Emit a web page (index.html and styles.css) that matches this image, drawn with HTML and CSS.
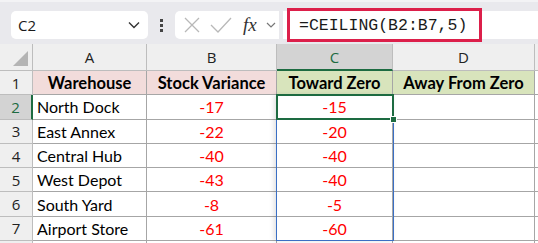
FILE: index.html
```html
<!DOCTYPE html>
<html lang="en">
  <head>
    <meta charset="UTF-8" />
    <title>CEILING</title>
    <link rel="stylesheet" href="styles.css">
  </head>
  <body>

    <div class="toolbar">
      <div class="name-box">
        <span>C2</span>
        <svg width="12" height="8" viewBox="0 0 12 8"><path d="M1 1.5 L6 6.5 L11 1.5" fill="none" stroke="#333" stroke-width="1.4"/></svg>
      </div>
      <div class="dots"><i></i><i></i><i></i></div>
      <div class="controls">
        <svg width="18" height="18" viewBox="0 0 18 18"><path d="M2 2 L16 16 M16 2 L2 16" stroke="#b8b8b8" stroke-width="1.3"/></svg>
        <svg width="22" height="18" viewBox="0 0 22 18"><path d="M1 9 L8 16 L21 2" fill="none" stroke="#b8b8b8" stroke-width="1.3"/></svg>
        <span class="fx">fx</span>
        <svg width="10" height="7" viewBox="0 0 10 7"><path d="M1 1 L5 5 L9 1" fill="none" stroke="#777" stroke-width="1.2"/></svg>
      </div>
      <div class="formula-bar">
        <div class="formula">=CEILING(B2:B7,5)</div>
      </div>
    </div>

    <div class="sheet">
      <div class="corner"><b></b></div>
      <div class="col-head">A</div>
      <div class="col-head">B</div>
      <div class="col-head active">C</div>
      <div class="col-head">D</div>
      <div class="col-head blank"></div>

      <div class="row-head">1</div>
      <div class="cell title pink">Warehouse</div>
      <div class="cell title pink">Stock Variance</div>
      <div class="cell title green">Toward Zero</div>
      <div class="cell title green">Away From Zero</div>
      <div class="cell spare"></div>

      <div class="row-head active">2</div>
      <div class="cell">North Dock</div>
      <div class="cell num">-17</div>
      <div class="cell num">-15</div>
      <div class="cell"></div>
      <div class="cell spare"></div>

      <div class="row-head">3</div>
      <div class="cell">East Annex</div>
      <div class="cell num">-22</div>
      <div class="cell num">-20</div>
      <div class="cell"></div>
      <div class="cell spare"></div>

      <div class="row-head">4</div>
      <div class="cell">Central Hub</div>
      <div class="cell num">-40</div>
      <div class="cell num">-40</div>
      <div class="cell"></div>
      <div class="cell spare"></div>

      <div class="row-head">5</div>
      <div class="cell">West Depot</div>
      <div class="cell num">-43</div>
      <div class="cell num">-40</div>
      <div class="cell"></div>
      <div class="cell spare"></div>

      <div class="row-head">6</div>
      <div class="cell">South Yard</div>
      <div class="cell num">-8</div>
      <div class="cell num">-5</div>
      <div class="cell"></div>
      <div class="cell spare"></div>

      <div class="row-head">7</div>
      <div class="cell">Airport Store</div>
      <div class="cell num">-61</div>
      <div class="cell num">-60</div>
      <div class="cell"></div>
      <div class="cell spare"></div>

      <div class="row-head"></div>
      <div class="cell"></div>
      <div class="cell"></div>
      <div class="cell"></div>
      <div class="cell"></div>
      <div class="cell spare"></div>

      <div class="range"></div>
      <div class="active-cell"><span class="handle"></span></div>
    </div>

  </body>
</html>
```

FILE: styles.css
```css
body {
  margin: 0;
  background: #ffffff;
  overflow: hidden;
}

.toolbar {
  height: 44px;
  box-sizing: border-box;
  padding: 11px 0 5px 11px;
  background: #e9e9ed;
  border-top: 2px solid #f3f3f5;
  display: flex;
  align-items: stretch;
  font-family: "Open Sans", sans-serif;
}

.name-box {
  width: 137px;
  box-sizing: border-box;
  background: #ffffff;
  border-radius: 5px;
  display: flex;
  align-items: center;
  justify-content: space-between;
  padding: 0 8px 0 7px;
  font-size: 15px;
  color: #1a1a1a;
  margin-top: -2px;
}

.dots {
  width: 27px;
  display: flex;
  flex-direction: column;
  align-items: center;
  justify-content: center;
  gap: 2px;
  margin-top: -2px;
}

.dots i {
  width: 3px;
  height: 3px;
  background: #444;
}

.controls {
  width: 104px;
  box-sizing: border-box;
  background: #ffffff;
  border-radius: 5px 0 0 5px;
  display: flex;
  align-items: center;
  gap: 9px;
  padding-left: 8px;
  margin-top: -2px;
}

.fx {
  font-family: "Liberation Serif", serif;
  font-style: italic;
  font-size: 19px;
  color: #333;
  margin-left: 2px;
}

.formula-bar {
  flex: 1;
  background: #ffffff;
  margin: -2px 0 0 4px;
  position: relative;
}

.formula {
  position: absolute;
  left: 4px;
  top: -3px;
  width: 195px;
  height: 34px;
  box-sizing: border-box;
  border: 3px solid #dc1f4a;
  padding-left: 9px;
  display: flex;
  align-items: center;
  font-family: "Liberation Mono", monospace;
  font-size: 16.5px;
  color: #1a1a1a;
}

.sheet {
  position: relative;
  display: grid;
  grid-template-columns: 33px 114px 130px 116px 142px 3px;
  grid-template-rows: 27px repeat(8, 24.3px);
  font-family: Lato, sans-serif;
  font-size: 16px;
  color: #000;
}

.corner {
  background: #efefef;
  border-right: 1px solid #bdbdbd;
  border-bottom: 1px solid #bdbdbd;
  position: relative;
}

.corner b {
  position: absolute;
  right: 4px;
  bottom: 4px;
  width: 0;
  height: 0;
  border-left: 15px solid transparent;
  border-bottom: 15px solid #b4b4b4;
}

.col-head {
  background: #efefef;
  border-right: 1px solid #bdbdbd;
  border-bottom: 1px solid #bdbdbd;
  display: flex;
  align-items: center;
  justify-content: center;
  font-family: "Open Sans", sans-serif;
  font-size: 15px;
  color: #222;
}

.col-head.active {
  background: #d3d3d3;
  color: #1d6b41;
  border-bottom: 2px solid #1d6b41;
}

.col-head.blank {
  border-right: none;
}

.row-head {
  background: #efefef;
  border-right: 1px solid #bdbdbd;
  border-bottom: 1px solid #bdbdbd;
  display: flex;
  align-items: center;
  justify-content: center;
  font-family: "Open Sans", sans-serif;
  font-size: 15px;
  color: #222;
}

.row-head.active {
  background: #d3d3d3;
  color: #1d6b41;
  border-right: 2px solid #1d6b41;
}

.cell {
  border-right: 1px solid #a6a6a6;
  border-bottom: 1px solid #a6a6a6;
  display: flex;
  align-items: center;
  padding-left: 4px;
  white-space: nowrap;
  overflow: hidden;
}

.cell.spare {
  border-right: none;
  padding: 0;
}

.title {
  font-weight: bold;
  font-size: 16.5px;
  justify-content: center;
  padding: 0;
}

.pink {
  background: #f2dcdb;
}

.green {
  background: #d8e4bc;
}

.num {
  color: #ff0000;
  justify-content: center;
  padding: 0;
}

.range {
  position: absolute;
  grid-column: 4 / 5;
  grid-row: 3 / 9;
  inset: 0 -1px 0 -1px;
  border: 1.5px solid #3a6fc4;
  box-shadow: -2px 0 5px rgba(0, 0, 0, 0.12);
  pointer-events: none;
}

.active-cell {
  position: absolute;
  grid-column: 4 / 5;
  grid-row: 3 / 4;
  inset: -1px -1px 0 -1px;
  border: 2px solid #1d6b41;
}

.handle {
  position: absolute;
  right: -5px;
  bottom: -5px;
  width: 5px;
  height: 5px;
  background: #1d6b41;
  border: 1px solid #ffffff;
}
```
